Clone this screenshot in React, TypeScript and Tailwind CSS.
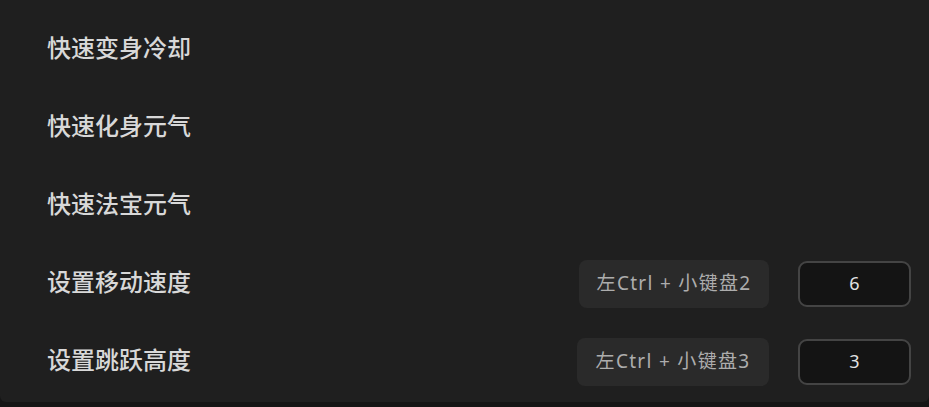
const rows = [
  { label: "快速变身冷却" },
  { label: "快速化身元气" },
  { label: "快速法宝元气" },
  { label: "设置移动速度", hotkey: "左Ctrl + 小键盘2", value: "6", badgeW: "w-[190px]" },
  { label: "设置跳跃高度", hotkey: "左Ctrl + 小键盘3", value: "3", badgeW: "w-[192px]" },
];

const App = () => {
  return (
    <div
      className="w-[929px] h-[407px] bg-[#151515] overflow-hidden"
      style={{ fontFamily: '"Noto Sans", "Noto Sans CJK SC", sans-serif' }}
    >
      <div className="h-[402px] bg-[#1f1f1f] rounded-b-[6px] pt-[9px] pl-[47px] pr-[18px]">
        {rows.map((row) => (
          <div key={row.label} className="h-[78px] flex items-center justify-between">
            <span className="text-[24px] font-medium text-[#d8d8d8]">{row.label}</span>
            {row.hotkey && (
              <div className="flex items-center gap-[29px] mt-[3px]">
                <div
                  className={`${row.badgeW} h-[48px] rounded-[8px] bg-[#2a2a2a] flex items-center justify-center text-[19px] tracking-[1.3px] text-[#adadad]`}
                >
                  {row.hotkey}
                </div>
                <div className="w-[113px] h-[46px] rounded-[9px] border-2 border-[#444444] bg-[#141414] flex items-center justify-center text-[18px] text-[#e2e2e2]">
                  {row.value}
                </div>
              </div>
            )}
          </div>
        ))}
      </div>
    </div>
  );
};

export default App;
